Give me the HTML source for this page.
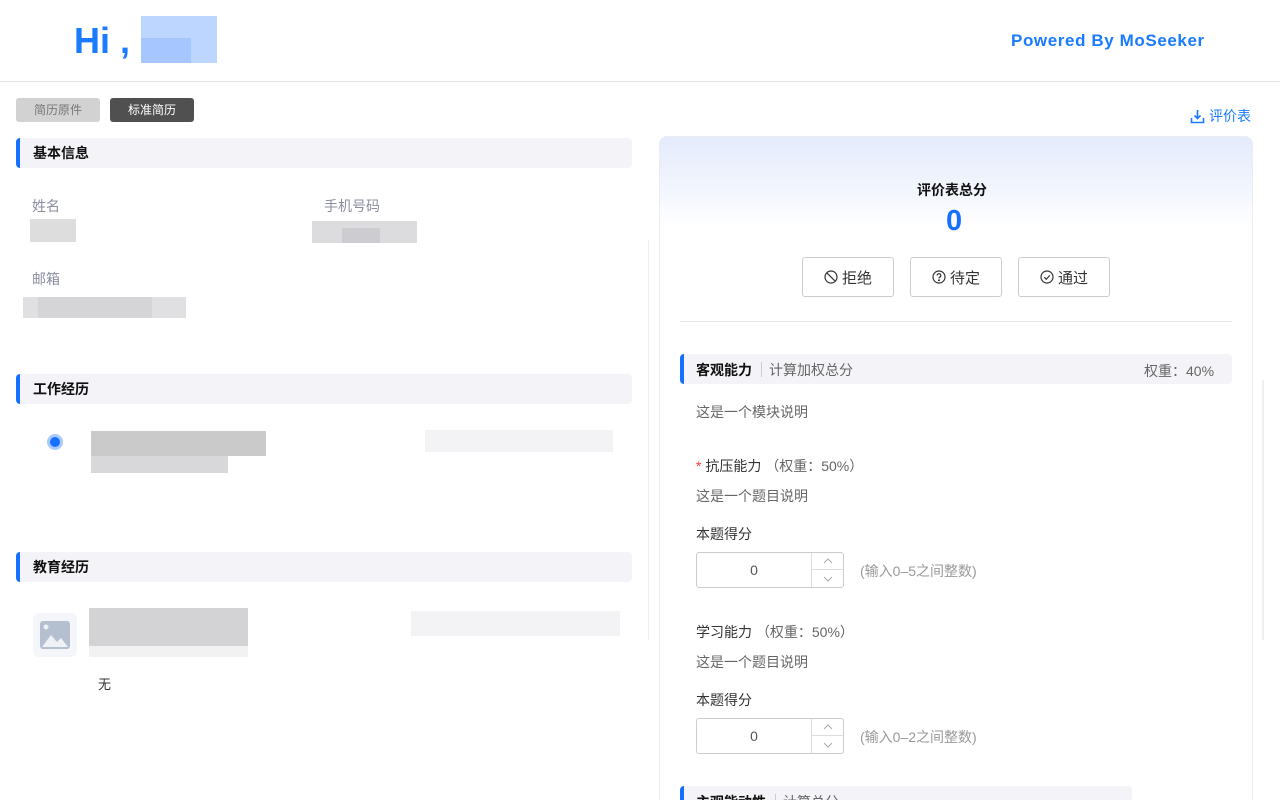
<!DOCTYPE html>
<html><head><meta charset="utf-8"><style>
*{margin:0;padding:0;box-sizing:border-box}
html,body{width:1280px;height:800px;overflow:hidden}
body{background:#fff;font-family:"Liberation Sans","Noto Sans CJK SC",sans-serif;position:relative;color:#222}
.a{position:absolute}
.sec{position:absolute;left:16px;width:616px;height:30px;background:#f4f4f8;border-radius:4px;border-left:4px solid #1670ff;font-size:14px;font-weight:bold;padding-left:13px;line-height:30px;color:#111}
.lbl{font-size:14px;color:#8a8ca0}
.btn{position:absolute;top:257px;width:92px;height:40px;border:1px solid #ccc;border-radius:3px;font-size:15px;color:#333;display:flex;align-items:center;justify-content:center;gap:4px;background:#fff}
.t{position:absolute;font-size:14px;color:#333}
.g{color:#666}
.inp{position:absolute;left:696px;width:148px;height:36px;border:1px solid #ccc;border-radius:3px;font-size:14px;color:#555}
.inp .v{position:absolute;left:0;width:114px;top:0;height:34px;line-height:34px;text-align:center}
.inp .s{position:absolute;left:114px;top:0;width:32px;height:34px;border-left:1px solid #ddd}
.inp .s div{height:17px;display:flex;align-items:center;justify-content:center}
.inp .s div:first-child{border-bottom:1px solid #ddd}
.hint{position:absolute;left:860px;font-size:14px;color:#999}
</style></head><body>
<div class="a" style="left:74px;top:20px;font-size:36px;font-weight:bold;color:#1a7bff">Hi ,</div>
<div class="a" style="left:141px;top:16px;width:76px;height:47px;background:#bcd6ff"></div>
<div class="a" style="left:141px;top:38px;width:50px;height:25px;background:#a6c6ff"></div>
<div class="a" style="left:1011px;top:31px;font-size:17px;font-weight:bold;color:#1a7bff;letter-spacing:0.6px">Powered By MoSeeker</div>
<div class="a" style="left:0;top:81px;width:1280px;height:1px;background:#e3e8ef"></div>
<div class="a" style="left:16px;top:98px;width:84px;height:24px;background:#d2d2d2;border-radius:3px;font-size:12px;color:#777;text-align:center;line-height:24px">简历原件</div>
<div class="a" style="left:110px;top:98px;width:84px;height:24px;background:#505050;border-radius:3px;font-size:12px;color:#fff;text-align:center;line-height:24px">标准简历</div>
<div class="a" style="left:1190px;top:106px;font-size:14px;color:#1a7bff;display:flex;gap:4px;align-items:center"><svg width="15" height="15" viewBox="0 0 15 15" fill="none" stroke="#1a7bff" stroke-width="1.6"><path d="M7.5 1v8M4.5 6.5l3 3 3-3M1.5 9v4.5h12V9"/></svg>评价表</div>

<div class="sec" style="top:138px">基本信息</div>
<div class="a lbl" style="left:32px;top:196px">姓名</div>
<div class="a lbl" style="left:324px;top:196px">手机号码</div>
<div class="a" style="left:30px;top:219px;width:46px;height:23px;background:#ddd"></div>
<div class="a" style="left:312px;top:221px;width:105px;height:22px;background:#dcdcde"></div>
<div class="a" style="left:342px;top:228px;width:38px;height:15px;background:#cdccd0"></div>
<div class="a lbl" style="left:32px;top:269px">邮箱</div>
<div class="a" style="left:23px;top:297px;width:163px;height:21px;background:#e0e0e2"></div>
<div class="a" style="left:38px;top:297px;width:114px;height:21px;background:#d5d5d8"></div>

<div class="sec" style="top:374px">工作经历</div>
<div class="a" style="left:47px;top:434px;width:16px;height:16px;border-radius:50%;background:#1670ff;border:3px solid #a9c9ff"></div>
<div class="a" style="left:91px;top:431px;width:175px;height:25px;background:#cacaca"></div>
<div class="a" style="left:91px;top:456px;width:137px;height:17px;background:#d8d8da"></div>
<div class="a" style="left:425px;top:430px;width:188px;height:22px;background:#f3f3f6"></div>

<div class="sec" style="top:552px">教育经历</div>
<div class="a" style="left:33px;top:613px;width:44px;height:44px;background:#f5f6f9;border-radius:6px"></div>
<svg class="a" style="left:39px;top:620px" width="32" height="30" viewBox="0 0 32 30"><rect x="1" y="1" width="30" height="28" rx="3" fill="#b4bfd0"/><circle cx="7" cy="7" r="2.5" fill="#eef1f6"/><path d="M3 27l9-12 6 7 4-4 7 9z" fill="#eef1f6"/></svg>
<div class="a" style="left:89px;top:608px;width:159px;height:38px;background:#d3d3d6"></div>
<div class="a" style="left:89px;top:646px;width:159px;height:11px;background:#f2f2f2"></div>
<div class="a" style="left:411px;top:611px;width:209px;height:25px;background:#f3f3f6"></div>
<div class="a" style="left:98px;top:674px;font-size:13px;color:#333">无</div>
<div class="a" style="left:648px;top:240px;width:1px;height:400px;background:#eee"></div>

<div class="a" style="left:659px;top:136px;width:594px;height:700px;border:1px solid #ebedf2;border-radius:8px;background:linear-gradient(180deg,#e4ebfb 0%,#f4f7fe 60px,#fff 90px)"></div>
<div class="a" style="left:917px;top:180px;font-size:14px;font-weight:bold;color:#111">评价表总分</div>
<div class="a" style="left:946px;top:205px;font-size:29px;font-weight:bold;color:#1670ff">0</div>
<div class="btn" style="left:802px"><svg width="14" height="14" viewBox="0 0 14 14" fill="none" stroke="#333" stroke-width="1.2"><circle cx="7" cy="7" r="6"/><path d="M2.8 2.8l8.4 8.4"/></svg>拒绝</div>
<div class="btn" style="left:910px"><svg width="14" height="14" viewBox="0 0 14 14" fill="none" stroke="#333" stroke-width="1.2"><circle cx="7" cy="7" r="6"/><path d="M5.2 5.5a1.8 1.8 0 1 1 2.4 1.7c-.5.2-.6.6-.6 1.2"/><circle cx="7" cy="10.3" r=".4" fill="#333"/></svg>待定</div>
<div class="btn" style="left:1018px"><svg width="14" height="14" viewBox="0 0 14 14" fill="none" stroke="#333" stroke-width="1.2"><circle cx="7" cy="7" r="6"/><path d="M4.3 7.2l2 2 3.5-3.8"/></svg>通过</div>
<div class="a" style="left:680px;top:321px;width:552px;height:1px;background:#e6e6e6"></div>
<div class="a" style="left:680px;top:354px;width:552px;height:30px;background:#f4f4f8;border-radius:4px;border-left:4px solid #1670ff"></div>
<div class="t" style="left:696px;top:360px;font-weight:bold;color:#111">客观能力</div>
<div class="a" style="left:761px;top:362px;width:1px;height:15px;background:#ccc"></div>
<div class="t g" style="left:769px;top:360px">计算加权总分</div>
<div class="t g" style="left:1144px;top:361px">权重：40%</div>
<div class="t g" style="left:696px;top:402px">这是一个模块说明</div>
<div class="t" style="left:696px;top:456px"><span style="color:#f33">*</span> 抗压能力 <span class="g">（权重：50%）</span></div>
<div class="t g" style="left:696px;top:486px">这是一个题目说明</div>
<div class="t" style="left:696px;top:524px">本题得分</div>
<div class="inp" style="top:552px"><div class="v">0</div><div class="s"><div><svg width="10" height="6"><path d="M1 5l4-4 4 4" fill="none" stroke="#aaa"/></svg></div><div><svg width="10" height="6"><path d="M1 1l4 4 4-4" fill="none" stroke="#aaa"/></svg></div></div></div>
<div class="hint" style="top:561px">(输入0–5之间整数)</div>
<div class="t" style="left:696px;top:622px">学习能力 <span class="g">（权重：50%）</span></div>
<div class="t g" style="left:696px;top:652px">这是一个题目说明</div>
<div class="t" style="left:696px;top:690px">本题得分</div>
<div class="inp" style="top:718px"><div class="v">0</div><div class="s"><div><svg width="10" height="6"><path d="M1 5l4-4 4 4" fill="none" stroke="#aaa"/></svg></div><div><svg width="10" height="6"><path d="M1 1l4 4 4-4" fill="none" stroke="#aaa"/></svg></div></div></div>
<div class="hint" style="top:727px">(输入0–2之间整数)</div>
<div class="a" style="left:680px;top:786px;width:452px;height:30px;background:#f4f4f8;border-radius:4px;border-left:4px solid #1670ff"></div>
<div class="t" style="left:696px;top:792px;font-weight:bold;color:#111">主观能动性</div>
<div class="a" style="left:775px;top:794px;width:1px;height:15px;background:#ccc"></div>
<div class="t g" style="left:783px;top:792px">计算总分</div>
<div class="a" style="left:1262px;top:380px;width:2px;height:260px;background:#f0f0f0"></div>
</body></html>
